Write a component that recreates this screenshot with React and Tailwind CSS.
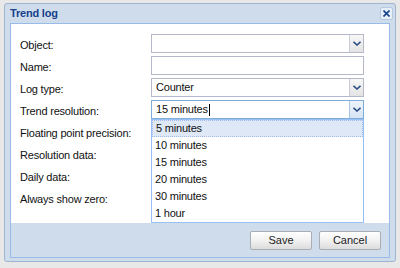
import React from 'react'

const font = { fontFamily: '"Liberation Sans", Arial, sans-serif' }

function Chevron() {
  return (
    <svg width="8" height="5" viewBox="0 0 8 5">
      <path d="M0.5 0.8 L4 4 L7.5 0.8" fill="none" stroke="#2d4f86" strokeWidth="1.6" />
    </svg>
  )
}

function Combo({ value, focused }) {
  return (
    <div className={`flex h-[19px] w-[213px] border ${focused ? 'border-[#7eadd9]' : 'border-[#b5b8c8]'} bg-white`}>
      <div className="flex flex-1 items-center pl-[4px] text-[11px] tracking-[-0.2px] text-[#111]">
        {value}
        {focused && <span className="ml-[1px] inline-block h-[12px] w-px bg-black" />}
      </div>
      <div className={`flex w-[14px] items-center justify-center border-l ${focused ? 'border-[#a7c4e4] bg-gradient-to-b from-[#eef4fb] to-[#d6e4f4]' : 'border-[#c9ccd6] bg-gradient-to-b from-[#f7f7f7] to-[#e4e4e4]'}`}>
        <Chevron />
      </div>
    </div>
  )
}

function Text() {
  return <div className="h-[19px] w-[213px] border border-[#b5b8c8] bg-white" />
}

const rows = [
  ['Object:', <Combo value="" />],
  ['Name:', <Text />],
  ['Log type:', <Combo value="Counter" />],
  ['Trend resolution:', <Combo value="15 minutes" focused />],
  ['Floating point precision:', null],
  ['Resolution data:', null],
  ['Daily data:', null],
  ['Always show zero:', null],
]

const options = ['5 minutes', '10 minutes', '15 minutes', '20 minutes', '30 minutes', '1 hour']

function Button({ children }) {
  return (
    <button className="h-[19px] w-[62px] rounded-[2px] border border-[#a9adb4] bg-gradient-to-b from-[#ffffff] via-[#f1f1f1] to-[#dcdcdc] text-[11px] text-[#222]">
      {children}
    </button>
  )
}

export default function App() {
  return (
    <div className="h-[268px] w-[400px] bg-[#e8e8e8] pl-[4px] pt-[3px]" style={font}>
      <div className="flex h-[259px] w-[392px] flex-col rounded-[3px] border border-[#9fb4cf] bg-[#cfdcec] px-[5px] pb-[3px]">
        <div className="flex h-[19px] items-center justify-between">
          <span className="text-[11px] font-bold tracking-[-0.2px] text-[#15428b]">Trend log</span>
          <div className="-mr-[3px] flex h-[13px] w-[13px] items-center justify-center rounded-[2px] border border-[#b6c9e2] bg-[#e6eef8]">
            <svg width="7" height="7" viewBox="0 0 7 7">
              <path d="M0.5 0.5 L6.5 6.5 M6.5 0.5 L0.5 6.5" stroke="#15428b" strokeWidth="1.6" />
            </svg>
          </div>
        </div>
        <div className="flex flex-1 flex-col border border-[#99bbe8]">
          <div className="relative h-[199px] bg-white pl-[9px] pt-[9px]">
            {rows.map(([label, field]) => (
              <div key={label} className="flex h-[22px] items-start">
                <div className="w-[131px] pt-[4px] text-[11px] tracking-[-0.2px] text-[#111]">{label}</div>
                <div className="pt-[1px]">{field}</div>
              </div>
            ))}
            <div className="absolute left-[140px] top-[95px] z-10 w-[213px] border border-[#98c0f4] bg-white">
              {options.map((o, i) => (
                <div
                  key={o}
                  className={`flex h-[17px] items-center pl-[3px] text-[11px] tracking-[-0.2px] text-[#111] ${i === 0 ? 'border border-dotted border-[#a3bae9] bg-[#dfe8f6]' : ''}`}
                >
                  {o}
                </div>
              ))}
            </div>
          </div>
          <div className="flex flex-1 items-start justify-end gap-[7px] pr-[8px] pt-[8px]">
            <Button>Save</Button>
            <Button>Cancel</Button>
          </div>
        </div>
      </div>
    </div>
  )
}
